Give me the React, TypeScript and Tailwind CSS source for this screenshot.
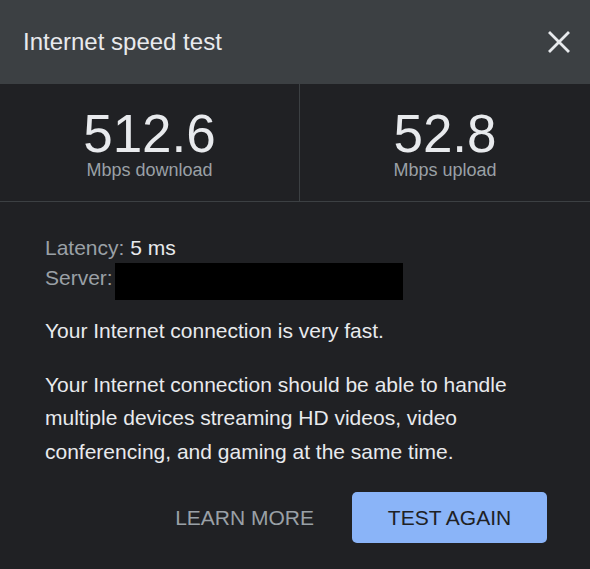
import React from "react";

export default function App() {
  return (
    <div className="w-[590px] h-[569px] bg-[#202124] overflow-hidden" style={{ fontFamily: '"Liberation Sans", Arial, sans-serif' }}>
      <div className="h-[83px] bg-[#3c4043] flex items-center justify-between pl-[23px] pr-[20px]">
        <span className="text-[24px] text-[#e8eaed]">Internet speed test</span>
        <svg width="22" height="22" viewBox="0 0 22 22">
          <path d="M2 2 L20 20 M20 2 L2 20" stroke="#e8eaed" strokeWidth="2.8" strokeLinecap="square" />
        </svg>
      </div>
      <div className="h-[119px] border-t border-b border-[#3c4043] grid grid-cols-[300px_1fr]">
        <div className="border-r border-[#3c4043] flex flex-col items-center pt-[28px]">
          <div className="text-[53px] leading-[44px] text-[#e8eaed] h-[44px]">512.6</div>
          <div className="mt-[5px] text-[18px] leading-[18px] text-[#9aa0a6]">Mbps download</div>
        </div>
        <div className="flex flex-col items-center pt-[28px]">
          <div className="text-[53px] leading-[44px] text-[#e8eaed] h-[44px]">52.8</div>
          <div className="mt-[5px] text-[18px] leading-[18px] text-[#9aa0a6]">Mbps upload</div>
        </div>
      </div>
      <div className="pl-[45px] pr-[40px] pt-[31px] text-[21px] text-[#e8eaed]">
        <div className="leading-[30px]">
          <span className="text-[#9aa0a6]">Latency: </span>5 ms
        </div>
        <div className="flex items-start leading-[30px]">
          <span className="text-[#9aa0a6]">Server:</span>
          <div className="ml-[2px] w-[288px] h-[37px] bg-black" />
        </div>
        <p className="mt-[14px] leading-[33.5px]">Your Internet connection is very fast.</p>
        <p className="mt-[20px] leading-[33.5px] w-[470px]">
          Your Internet connection should be able to handle multiple devices streaming HD videos, video conferencing, and gaming at the same time.
        </p>
      </div>
      <div className="flex justify-end items-center pr-[43px] mt-[24px] gap-[38px]">
        <span className="text-[21px] text-[#9aa0a6]">LEARN MORE</span>
        <div className="w-[195px] h-[51px] rounded-[5px] bg-[#8ab4f8] flex items-center justify-center text-[21px] text-[#202124]">
          TEST AGAIN
        </div>
      </div>
    </div>
  );
}
